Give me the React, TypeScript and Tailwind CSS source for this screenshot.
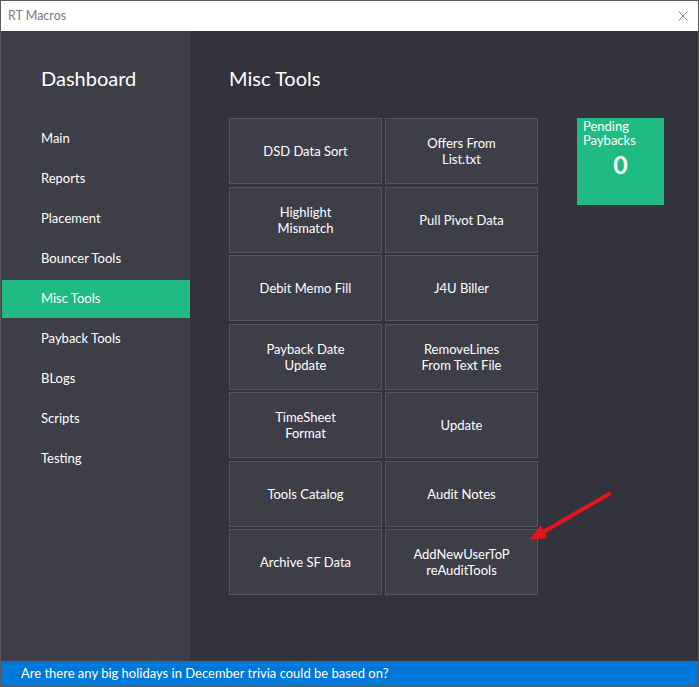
import React from "react";

const menu = ["Main", "Reports", "Placement", "Bouncer Tools", "Misc Tools", "Payback Tools", "BLogs", "Scripts", "Testing"];

const buttons: string[][] = [
  ["DSD Data Sort"],
  ["Offers From", "List.txt"],
  ["Highlight", "Mismatch"],
  ["Pull Pivot Data"],
  ["Debit Memo Fill"],
  ["J4U Biller"],
  ["Payback Date", "Update"],
  ["RemoveLines", "From Text File"],
  ["TimeSheet", "Format"],
  ["Update"],
  ["Tools Catalog"],
  ["Audit Notes"],
  ["Archive SF Data"],
  ["AddNewUserToP", "reAuditTools"],
];

export default function App() {
  return (
    <div
      className="relative w-[699px] h-[687px] border border-[#5a5a5a] flex flex-col bg-[#33333d] overflow-hidden"
      style={{ fontFamily: 'Lato, "Noto Sans", sans-serif' }}
    >
      {/* Title bar */}
      <div className="h-[30px] bg-white flex items-center justify-between pl-[7px] pr-[10px] shrink-0">
        <span className="text-[12.5px] text-[#7a7a7a]">RT Macros</span>
        <svg width="10" height="10" viewBox="0 0 10 10">
          <path d="M0.5 0.5 L9.5 9.5 M9.5 0.5 L0.5 9.5" stroke="#8a8a8a" strokeWidth="1" fill="none" />
        </svg>
      </div>

      {/* Content */}
      <div className="flex-1 flex min-h-0">
        {/* Sidebar */}
        <div className="w-[189px] bg-[#3e3e48] flex flex-col pl-[1px] shrink-0">
          <div className="h-[89px] flex items-start pt-[34px] pl-[39px]">
            <span className="text-[20px] leading-[26px] text-white">Dashboard</span>
          </div>
          <div className="flex flex-col gap-[2px]">
            {menu.map((m) => (
              <div
                key={m}
                className={
                  "h-[38px] flex items-center pl-[39px] text-[13px] text-white " +
                  (m === "Misc Tools" ? "bg-[#1fbb82]" : "")
                }
              >
                {m}
              </div>
            ))}
          </div>
        </div>

        {/* Main */}
        <div className="flex-1 flex flex-col pl-[39px]">
          <div className="h-[87px] pt-[34px]">
            <span className="text-[20px] leading-[26px] text-white">Misc Tools</span>
          </div>
          <div className="flex items-start gap-[39px]">
            <div className="grid grid-cols-[153px_153px] auto-rows-[66px] gap-x-[3px] gap-y-[2.5px]">
              {buttons.map((b, i) => (
                <div
                  key={i}
                  className="border border-[#55555f] bg-[#3e3e48] flex flex-col items-center justify-center text-[13px] leading-[16px] text-white text-center"
                >
                  {b.map((l, j) => (
                    <span key={j}>{l}</span>
                  ))}
                </div>
              ))}
            </div>
            <div className="w-[87px] h-[87px] bg-[#1fbb82] flex flex-col pl-[6px] pt-[1px] text-white">
              <span className="text-[13px] leading-[14px]">Pending</span>
              <span className="text-[13px] leading-[14px]">Paybacks</span>
              <span className="text-[25px] font-bold leading-[30px] text-center pr-[6px] mt-[2px]">0</span>
            </div>
          </div>
        </div>
      </div>

      {/* Status bar */}
      <div className="h-[25px] bg-[#0078d7] flex items-center pl-[20px] shrink-0">
        <span className="text-[13px] text-white">Are there any big holidays in December trivia could be based on?</span>
      </div>

      {/* Red arrow annotation */}
      <svg className="absolute left-0 top-0 pointer-events-none" width="699" height="687">
        <line x1="608" y1="493" x2="543" y2="530.5" stroke="#e8141b" strokeWidth="4" strokeLinecap="round" />
        <polygon points="529,538.5 539.5,524.5 547,537" fill="#e8141b" />
      </svg>
    </div>
  );
}
